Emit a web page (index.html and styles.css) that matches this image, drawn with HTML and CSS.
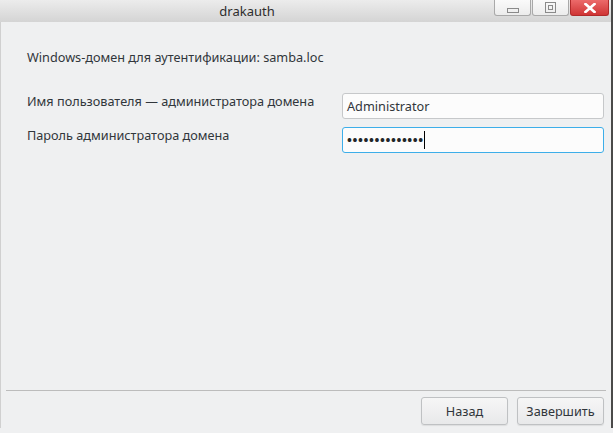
FILE: index.html
```html
<!DOCTYPE html>
<html lang="ru">
<head>
    <meta charset="UTF-8">
    <title>drakauth</title>
    <link rel="stylesheet" href="styles.css">
</head>
<body>
    <div class="window">
        <div class="titlebar">
            <span class="title">drakauth</span>
            <div class="controls">
                <div class="ctl ctl-min">
                    <svg width="12" height="6" viewBox="0 0 12 6"><rect x="0.5" y="1.5" width="11" height="4" fill="none" stroke="#8a8a8a"/></svg>
                </div>
                <div class="ctl ctl-max">
                    <svg width="11" height="11" viewBox="0 0 11 11"><rect x="0.5" y="0.5" width="10" height="10" fill="none" stroke="#8a8a8a"/><rect x="3.5" y="3.5" width="4" height="4" fill="none" stroke="#8a8a8a"/></svg>
                </div>
                <div class="ctl ctl-close">
                    <svg width="12" height="10" viewBox="0 0 12 10"><path d="M1.5 1 L10.5 9 M10.5 1 L1.5 9" stroke="#fff" stroke-width="2.6" stroke-linecap="square"/></svg>
                </div>
            </div>
        </div>

        <div class="content">
            <p class="domain">Windows-домен для аутентификации: samba.loc</p>

            <div class="form">
                <div class="row">
                    <label class="label">Имя пользователя — администратора домена</label>
                    <div class="field">Administrator</div>
                </div>
                <div class="row">
                    <label class="label">Пароль администратора домена</label>
                    <div class="field field-focus"><span class="dots">••••••••••••••</span><span class="caret"></span></div>
                </div>
            </div>

            <div class="spacer"></div>
            <div class="separator"></div>

            <div class="actions">
                <button class="btn">Назад</button>
                <button class="btn">Завершить</button>
            </div>
        </div>
    </div>
</body>
</html>
```

FILE: styles.css
```css
body {
    margin: 0;
    padding: 0;
    background-color: #eff0f1;
    font-family: "Noto Sans", "Open Sans", sans-serif;
    font-size: 12.7px;
    color: #31363b;
}

.window {
    width: 613px;
    height: 428px;
    display: flex;
    flex-direction: column;
    box-sizing: border-box;
    border-right: 2px solid #4a4a4a;
}

.titlebar {
    height: 22px;
    display: flex;
    align-items: flex-start;
    background: linear-gradient(#ececec, #d4d4d4);
}

.title {
    flex: 1;
    text-align: center;
    line-height: 22px;
    font-size: 13px;
    color: #2d2d2d;
}

.controls {
    display: flex;
    gap: 1px;
    margin-right: 2px;
}

.ctl {
    width: 37px;
    height: 16px;
    box-sizing: border-box;
    border: 1px solid #a9a9a9;
    border-top: none;
    border-radius: 0 0 3px 3px;
    background: linear-gradient(#fafafa, #ececec);
    display: flex;
    align-items: center;
    justify-content: center;
}

.ctl-min svg {
    margin-top: 4px;
}

.ctl-close {
    width: 39px;
    border-color: #b02a2a;
    background: linear-gradient(#ec6a6a, #cf3535);
}

.content {
    flex: 1;
    display: flex;
    flex-direction: column;
    border-left: 1px solid #d0d0d0;
    padding: 0 0 3px 0;
}

.domain {
    margin: 26px 0 0 26px;
    line-height: 18px;
}

.form {
    margin-top: 27px;
    display: flex;
    flex-direction: column;
    gap: 8px;
}

.row {
    display: flex;
    align-items: flex-start;
    padding-left: 26px;
}

.label {
    width: 315px;
    line-height: 18px;
    margin-top: -1px;
}

.field {
    width: 262px;
    height: 26px;
    box-sizing: border-box;
    border: 1px solid #c6c8ca;
    border-radius: 3px;
    background-color: #fcfcfc;
    padding-left: 4px;
    line-height: 24px;
    display: flex;
    align-items: center;
}

.field-focus {
    border-color: #3daee9;
}

.dots {
    font-size: 13px;
    font-weight: bold;
    letter-spacing: 0.6px;
    color: #232629;
}

.caret {
    width: 1px;
    height: 18px;
    background-color: #000;
    margin-left: 0;
}

.spacer {
    flex: 1;
}

.separator {
    height: 1px;
    background-color: #bcbcbc;
    margin: 0 5px 0 5px;
}

.actions {
    display: flex;
    justify-content: flex-end;
    gap: 9px;
    padding: 6px 7px 0 0;
}

.btn {
    width: 87px;
    height: 28px;
    font-family: "Noto Sans", "Open Sans", sans-serif;
    font-size: 12.7px;
    color: #31363b;
    border: 1px solid #bfc1c3;
    border-radius: 3px;
    background: linear-gradient(#f6f6f6, #e8e9ea);
    box-shadow: 0 1px 1px rgba(0, 0, 0, 0.08);
    padding: 0;
}
```
